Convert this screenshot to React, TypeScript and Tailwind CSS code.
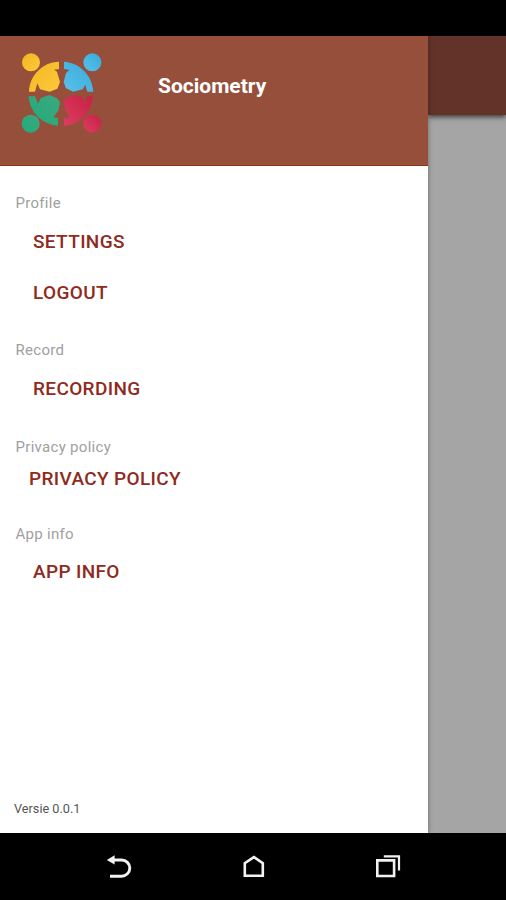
import React from 'react';

interface Section {
  title: string;
  items: string[];
  className: string;
  itemClassName: string;
}

const sections: Section[] = [
  { title: 'Profile', items: ['Settings', 'Logout'], className: 'mt-[27px]', itemClassName: 'mt-1 h-[51px] pl-[33px]' },
  { title: 'Record', items: ['Recording'], className: 'mt-[21px]', itemClassName: 'mt-1 h-[51px] pl-[33px]' },
  { title: 'Privacy policy', items: ['Privacy policy'], className: 'mt-[22px]', itemClassName: 'mt-[7px] h-[31px] pl-[29px]' },
  { title: 'App info', items: ['App info'], className: 'mt-[29px]', itemClassName: 'mt-[3px] h-[51px] pl-[33px]' },
];

const Logo: React.FC = () => (
  <svg className="h-[84px] w-[84px]" viewBox="60 66 252 252" fill="none">
    <defs>
      <linearGradient id="yellow" x1="0" y1="0" x2="1" y2="1">
        <stop offset="0" stopColor="#f5b51f" />
        <stop offset="1" stopColor="#fbca3e" />
      </linearGradient>
      <linearGradient id="blue" x1="0" y1="1" x2="1" y2="0">
        <stop offset="0" stopColor="#58c1ea" />
        <stop offset="1" stopColor="#39a9da" />
      </linearGradient>
      <linearGradient id="green" x1="0" y1="1" x2="1" y2="0">
        <stop offset="0" stopColor="#20ad7c" />
        <stop offset="1" stopColor="#3da77e" />
      </linearGradient>
      <linearGradient id="red" x1="0" y1="1" x2="1" y2="0">
        <stop offset="0" stopColor="#dc3f5f" />
        <stop offset="1" stopColor="#c71f45" />
      </linearGradient>
    </defs>
    <g fill="url(#yellow)">
      <circle cx="93" cy="97" r="27" />
      <path d="M177 95V117L162 119L171 125L180 156L172 176L149 185L120 178L112 160L105 185H87C89 137 126 96 177 95Z" />
    </g>
    <g fill="url(#blue)">
      <circle cx="277" cy="97" r="27" />
      <path d="M192 95C239 98 277 135 280 185H262L256 164L248 178L220 185L198 175L191 156L198 130L208 119L192 117Z" />
    </g>
    <g fill="url(#green)">
      <circle cx="92" cy="281" r="27" />
      <path d="M86 199H105L114 221L123 203L149 195L171 205L180 216L175 242L160 262L174 265V287C126 284 89 246 86 199Z" />
    </g>
    <g fill="url(#red)">
      <circle cx="277" cy="281" r="27" />
      <path d="M278 199C276 247 240 285 192 288V265L209 262L196 239L190 217L198 204L223 195L248 202L255 218L261 199Z" />
    </g>
  </svg>
);

const NavigationBar: React.FC = () => (
  <div className="flex h-[67px] items-center justify-between bg-black pr-[104px] pl-[105px] text-[#f2f2f2]">
    <svg className="h-7 w-7" viewBox="0 0 28 28" fill="none" stroke="currentColor" strokeWidth="2.9">
      <path d="M8 7H16.7a8.1 8.1 0 0 1 0 16.2H5" />
      <path d="M1.8 7L9.6 2.2V11.4Z" fill="currentColor" stroke="none" />
    </svg>
    <svg className="h-7 w-7" viewBox="0 0 28 28" fill="none" stroke="currentColor" strokeWidth="2.6">
      <path d="M4.8 22.8V10.1L13.9 4.1L22.8 10.1V22.8Z" />
    </svg>
    <svg className="h-7 w-7" viewBox="0 0 28 28" fill="none" stroke="currentColor" strokeWidth="2.6">
      <path d="M3.3 7.4H20.1V23H3.3Z" />
      <path d="M9.8 3.4H25V17.5" strokeWidth="2.2" />
    </svg>
  </div>
);

const App: React.FC = () => {
  return (
    <div className="flex h-[900px] w-[506px] flex-col overflow-hidden bg-black font-['Roboto',sans-serif]">
      <div className="h-9 shrink-0 bg-black" />
      <div className="flex h-[797px] shrink-0 overflow-hidden">
        <aside className="z-10 flex w-[428px] flex-col bg-white shadow-[0_0_5px_rgba(0,0,0,0.35)]">
          <header className="flex h-[130px] shrink-0 items-start border-b border-[#8a3615] bg-[#964f3b] pt-4 pl-5">
            <Logo />
            <h1 className="mt-5 ml-[54px] text-[21px] leading-7 font-bold text-white">Sociometry</h1>
          </header>
          <nav className="flex flex-col">
            {sections.map(section => (
              <section key={section.title} className={section.className}>
                <h2 className="pl-[15.5px] text-[15px] leading-[21px] -mb-px tracking-[0.3px] text-[#a0a0a0]">{section.title}</h2>
                <div>
                  {section.items.map((item, i) => (
                    <button
                      key={item}
                      className={`flex w-full items-center text-[19px] font-medium tracking-[0.35px] text-[#8f2a1d] uppercase ${section.itemClassName} ${i > 0 ? '!mt-0' : ''}`}
                    >
                      {item}
                    </button>
                  ))}
                </div>
              </section>
            ))}
          </nav>
          <p className="mt-auto mb-4 pl-[14px] text-[12.7px] leading-4 text-[#555]">Versie 0.0.1</p>
        </aside>
        <main className="flex flex-1 flex-col bg-[#a5a5a5]">
          <div className="h-[79px] bg-[#633329] shadow-[0_2px_5px_rgba(0,0,0,0.65)]" />
        </main>
      </div>
      <NavigationBar />
    </div>
  );
};

export default App;
